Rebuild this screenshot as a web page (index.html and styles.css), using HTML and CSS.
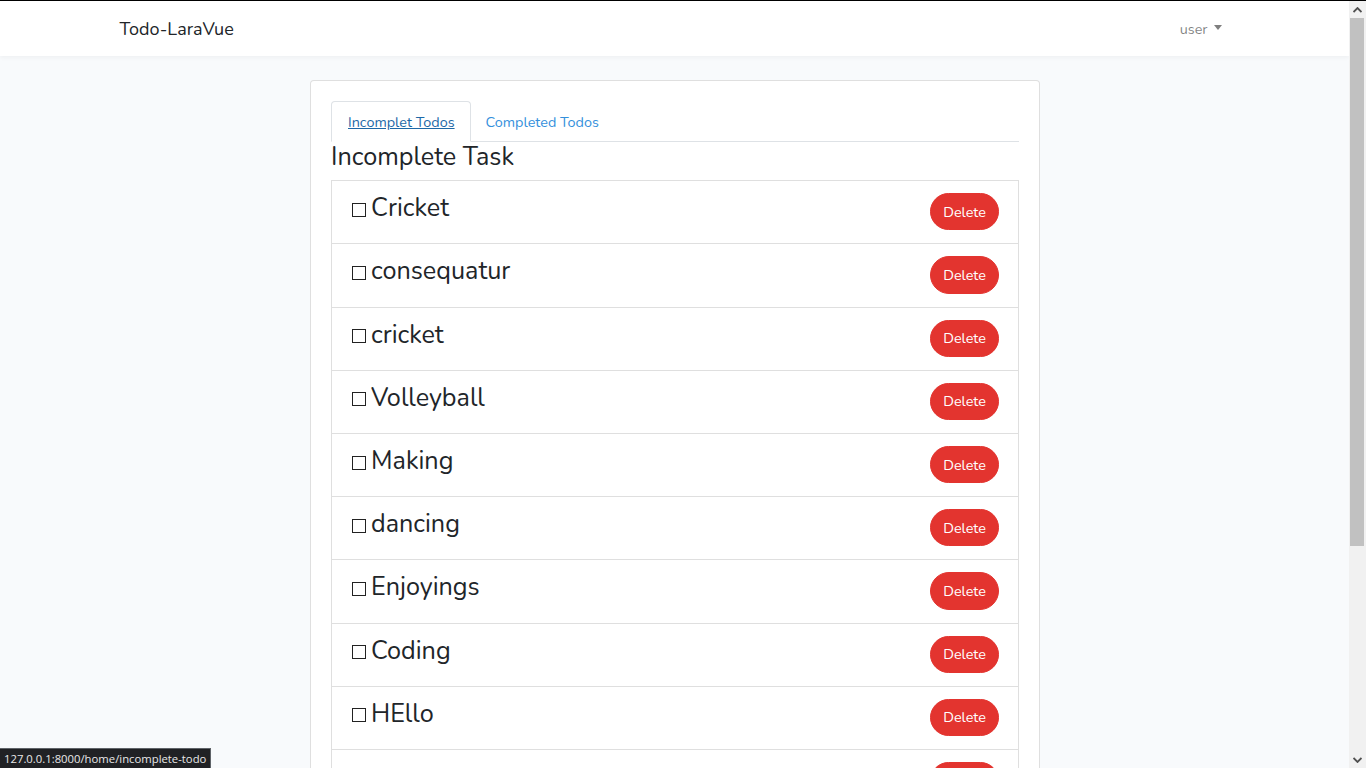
FILE: index.html
```html
<!DOCTYPE html>
<html lang="en">
<head>
<meta charset="utf-8">
<title>Todo-LaraVue</title>
<link rel="stylesheet" href="styles.css">
</head>
<body>
<div class="frame">
  <div class="page">
    <nav class="navbar">
      <div class="container nav-inner">
        <a class="brand" href="#">Todo-LaraVue</a>
        <a class="user" href="#">user <span class="caret"></span></a>
      </div>
    </nav>
    <main class="main">
      <div class="card">
        <div class="card-body">
          <ul class="tabs">
            <li class="tab active"><a href="#">Incomplet Todos</a></li>
            <li class="tab"><a href="#">Completed Todos</a></li>
          </ul>
          <h3 class="title">Incomplete Task</h3>
          <ul class="list">
            <li class="item"><span class="task"><span class="box"></span>Cricket</span><button class="btn-del">Delete</button></li>
            <li class="item"><span class="task"><span class="box"></span>consequatur</span><button class="btn-del">Delete</button></li>
            <li class="item"><span class="task"><span class="box"></span>cricket</span><button class="btn-del">Delete</button></li>
            <li class="item"><span class="task"><span class="box"></span>Volleyball</span><button class="btn-del">Delete</button></li>
            <li class="item"><span class="task"><span class="box"></span>Making</span><button class="btn-del">Delete</button></li>
            <li class="item"><span class="task"><span class="box"></span>dancing</span><button class="btn-del">Delete</button></li>
            <li class="item"><span class="task"><span class="box"></span>Enjoyings</span><button class="btn-del">Delete</button></li>
            <li class="item"><span class="task"><span class="box"></span>Coding</span><button class="btn-del">Delete</button></li>
            <li class="item"><span class="task"><span class="box"></span>HEllo</span><button class="btn-del">Delete</button></li>
            <li class="item"><span class="task"></span><button class="btn-del">Delete</button></li>
          </ul>
        </div>
      </div>
    </main>
  </div>
  <div class="scrollbar">
    <div class="sb-btn"><svg width="9" height="6" viewBox="0 0 9 6"><path d="M0.5 5 L4.5 1 L8.5 5" fill="none" stroke="#505050" stroke-width="1.8"/></svg></div>
    <div class="sb-track"><div class="sb-thumb"></div></div>
    <div class="sb-btn"><svg width="9" height="6" viewBox="0 0 9 6"><path d="M0.5 1 L4.5 5 L8.5 1" fill="none" stroke="#505050" stroke-width="1.8"/></svg></div>
  </div>
</div>
<div class="status">127.0.0.1:8000/home/incomplete-todo</div>
</body>
</html>
```
FILE: styles.css
```css
* { box-sizing: border-box; }
html, body { margin: 0; padding: 0; height: 100%; overflow: hidden; }
body {
  font-family: "Nunito", "Lato", "Open Sans", sans-serif;
  font-size: 14.4px;
  line-height: 1.6;
  color: #212529;
  background: #f8fafc;
  border-top: 1px solid #000;
}
.frame { display: flex; height: 767px; }
.page { flex: 1; overflow: hidden; background: #f8fafc; }
.container { max-width: 1140px; margin: 0 auto; padding: 0 15px; }
.navbar {
  background: #fff;
  height: 55px;
  box-shadow: 0 2px 4px rgba(0,0,0,.04);
  position: relative;
}
.nav-inner { display: flex; align-items: center; justify-content: space-between; height: 55px; }
.brand { color: #212529; text-decoration: none; font-size: 18px; margin-top: 2px; }
.user { color: rgba(0,0,0,.5); text-decoration: none; padding: 0 8px; display: flex; align-items: center; margin-top: 2px; }
.caret {
  display: inline-block; margin-left: 6px; width: 0; height: 0;
  border-top: 5px solid rgba(0,0,0,.5); border-left: 4px solid transparent; border-right: 4px solid transparent;
  margin-top: -3px;
}
.main { padding-top: 24px; display: flex; justify-content: center; }
.card {
  width: 730px; margin-left: 1px;
  background: #fff; border: 1px solid rgba(0,0,0,.125); border-radius: 4px;
}
.card-body { padding: 20px; }
.tabs { list-style: none; margin: 0; padding: 0; display: flex; border-bottom: 1px solid #dee2e6; }
.tab { margin-bottom: -1px; }
.tab a {
  display: block; padding: 9px 16px 7px; border: 1px solid transparent;
  border-radius: 4px 4px 0 0; color: #3490dc; text-decoration: none;
}
.tab.active a { color: #1d68a7; text-decoration: underline; background: #fff; border-color: #dee2e6 #dee2e6 #fff; padding-right: 15px; padding-left: 16px; }
.tab:not(.active) a { padding-left: 16px; margin-left: -2px; }
.title { margin: 0 0 8px; font-weight: 400; font-size: 25.2px; line-height: 1.2; }
.list { list-style: none; margin: 0; padding: 0; }
.item {
  display: flex; justify-content: space-between; align-items: flex-start;
  height: 64.2px;
  padding: 12px 20px; border: 1px solid rgba(0,0,0,.125); margin-bottom: -1px; background: #fff;
}
.task { font-size: 25.2px; line-height: 1.2; display: flex; align-items: center; margin-top: 0; }
.box { display: inline-block; width: 14px; height: 14px; border: 1.5px solid #222; margin-right: 5px; margin-top: 3px; }
.btn-del {
  font-family: inherit; font-size: 14.4px; line-height: 1.6; height: 37.2px;
  color: #fff; background: #e3342f; border: 1px solid #e3342f;
  border-radius: 20px; padding: 1px 12px 0; margin-right: -1px; cursor: pointer;
}
.scrollbar { width: 17px; background: #f1f1f1; display: flex; flex-direction: column; }
.sb-btn { height: 17px; display: flex; align-items: center; justify-content: center; }
.sb-track { flex: 1; padding: 0 2px 0 1px; }
.sb-thumb { height: 528px; background: #c1c1c1; }
.status {
  position: fixed; left: 0; bottom: 0; height: 20px; padding: 0 4px;
  background: #202124; color: #e8e8e8; border: 1px solid #5f6368; border-left: 0; border-bottom: 0;
  font-family: "Open Sans", "DejaVu Sans", sans-serif; font-size: 11.3px; line-height: 19px;
}
```
